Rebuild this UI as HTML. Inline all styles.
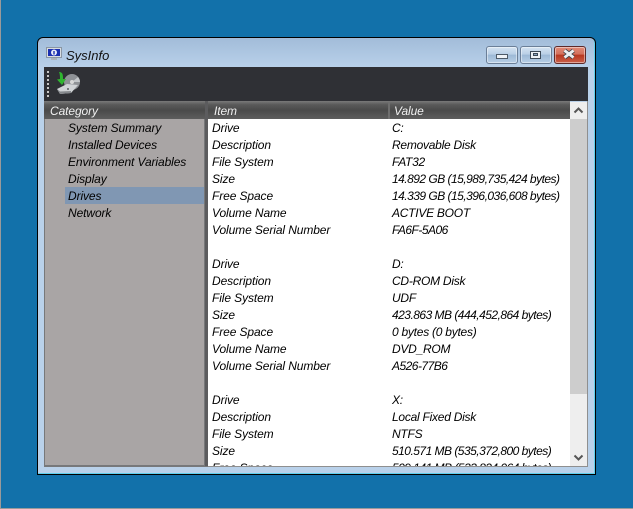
<!DOCTYPE html>
<html><head><meta charset="utf-8"><style>
html,body{margin:0;padding:0}
body{width:633px;height:509px;overflow:hidden;background:#1271aa;position:relative;font:italic 12px "Liberation Sans",sans-serif;color:#000}
div{position:absolute;box-sizing:border-box}
.t{white-space:nowrap;line-height:17px;height:17px;letter-spacing:-.1px}
.n{letter-spacing:-.52px}
.v{letter-spacing:-.25px}
.b{border:1px solid #6b7f98;border-radius:3px;height:18px;top:46px;background:linear-gradient(#d5e3f2 0,#b9cfe6 45%,#9db9d6 50%,#b8cfe6 100%);box-shadow:inset 0 0 0 1px rgba(255,255,255,.45)}
</style></head><body>
<div style="left:0;top:0;width:633px;height:509px;border-left:1px solid #9a9a9a;border-bottom:1px solid #9a9a9a"></div>
<div style="left:37px;top:37px;width:559px;height:438px;background:linear-gradient(#a2bcd9 0,#b9d1ea 30px);border:1px solid #000;border-radius:6px 6px 0 0;box-shadow:inset -1px -1px 0 #5fd0ee"></div>
<svg style="position:absolute;left:46px;top:47px" width="17" height="14" viewBox="0 0 17 14"><rect x=".5" y=".5" width="15" height="10" fill="#d8dde2" stroke="#8a96a3"/><rect x="2" y="2" width="12" height="7" fill="#1a2fb0"/><circle cx="8" cy="5.5" r="3" fill="#e8ecf8"/><rect x="7.3" y="4" width="1.4" height="3.5" fill="#1a2fb0"/><rect x="5" y="11" width="6" height="2" fill="#aab2ba"/></svg>
<div class="t" style="left:66px;top:47px;font-size:13px;color:#111;letter-spacing:0">SysInfo</div>
<div class="b" style="left:486px;width:32px"></div>
<div style="left:496px;top:54px;width:12px;height:5px;background:#eef2f7;border:1px solid #4d5a68"></div>
<div class="b" style="left:520px;width:32px"></div>
<div style="left:530px;top:51px;width:11px;height:8px;background:#eef2f7;border:1px solid #3d4a58"></div>
<div style="left:533px;top:53px;width:5px;height:3px;background:#8aa4c0;border:1px solid #3d4a58"></div>
<div class="b" style="left:554px;width:32px;border-color:#5e2a2a;background:linear-gradient(#e08a78 0,#d3705c 45%,#b8361f 50%,#c9604a 100%)"></div>
<svg style="position:absolute;left:561px;top:48px" width="16" height="12" viewBox="0 0 16 12"><path d="M3.5 2.5L12.5 9.5M12.5 2.5L3.5 9.5" stroke="#3c4248" stroke-width="4.4"/><path d="M3.5 2.5L12.5 9.5M12.5 2.5L3.5 9.5" stroke="#eceff2" stroke-width="2.8"/></svg>
<div style="left:44px;top:67px;width:544px;height:34px;background:#2f3035"></div>
<div style="left:47px;top:71px;width:2px;height:27px;background:repeating-linear-gradient(#c8c8c8 0 2px,#2f3035 2px 4px)"></div>
<svg style="position:absolute;left:56px;top:71px" width="26" height="26" viewBox="0 0 26 26"><circle cx="16" cy="11" r="8" fill="#8f9296"/><path d="M16 11L22 6A8 8 0 0 1 24 11Z" fill="#c4c7ca"/><circle cx="16" cy="11" r="2" fill="#d8d8d8"/><path d="M1 18L11 13L22 14L15 22L4 23Z" fill="#d0d3d6"/><path d="M1 18L4 23L15 22L15 20L4 20.5Z" fill="#85888c"/><circle cx="12" cy="18" r="1" fill="#5a5d60"/><path d="M3 1C5 1 6 2 6.5 3C7 5 7 6 7 8L10 8L6 14L1 8.5L4 8C4 6 4 3 3 1Z" fill="#2fb52f"/></svg>
<div style="left:44px;top:101px;width:161px;height:365px;background:#a9a5a5;border:1px solid #77787a;border-top:0"></div>
<div style="left:44px;top:101px;width:161px;height:18px;background:linear-gradient(#7a7a7a 0,#5a5a5a 20%,#4a4a4a 50%,#5d5d5d 100%)"></div>
<div style="left:205px;top:101px;width:3px;height:365px;background:#5c5c5e"></div>
<div style="left:208px;top:101px;width:362px;height:18px;background:linear-gradient(#7a7a7a 0,#5a5a5a 20%,#4a4a4a 50%,#5d5d5d 100%)"></div>
<div style="left:388px;top:102px;width:2px;height:17px;background:#6f6f6f"></div>
<div style="left:208px;top:119px;width:362px;height:347px;background:#fff"></div>
<div style="left:570px;top:102px;width:17px;height:364px;background:#eeeeee"></div>
<div style="left:570px;top:119px;width:17px;height:275px;background:#cdcdcd"></div>
<div style="left:587px;top:101px;width:1px;height:366px;background:#8f8f8f"></div>
<div style="left:208px;top:466px;width:380px;height:1px;background:#8f8f8f"></div>
<div style="left:44px;top:466px;width:164px;height:1px;background:#77787a"></div>
<svg style="position:absolute;left:572px;top:105px" width="13" height="10" viewBox="0 0 13 10"><path d="M2.5 7.5L6.5 3.5L10.5 7.5" fill="none" stroke="#555" stroke-width="2"/></svg>
<svg style="position:absolute;left:572px;top:453px" width="13" height="10" viewBox="0 0 13 10"><path d="M2.5 2.5L6.5 6.5L10.5 2.5" fill="none" stroke="#555" stroke-width="2"/></svg>
<div style="left:65px;top:187px;width:139px;height:17px;background:#8097b3"></div>
<div style="left:208px;top:120px;width:362px;height:346px;overflow:hidden">
<div class="t" style="left:4px;top:0">Drive</div><div class="t v" style="left:184px;top:0">C:</div>
<div class="t" style="left:4px;top:17px">Description</div><div class="t v" style="left:184px;top:17px">Removable Disk</div>
<div class="t" style="left:4px;top:34px">File System</div><div class="t v" style="left:184px;top:34px">FAT32</div>
<div class="t" style="left:4px;top:51px">Size</div><div class="t n" style="left:184px;top:51px">14.892 GB (15,989,735,424 bytes)</div>
<div class="t" style="left:4px;top:68px">Free Space</div><div class="t n" style="left:184px;top:68px">14.339 GB (15,396,036,608 bytes)</div>
<div class="t" style="left:4px;top:85px">Volume Name</div><div class="t v" style="left:184px;top:85px">ACTIVE BOOT</div>
<div class="t" style="left:4px;top:102px">Volume Serial Number</div><div class="t n" style="left:184px;top:102px">FA6F-5A06</div>
<div class="t" style="left:4px;top:136px">Drive</div><div class="t v" style="left:184px;top:136px">D:</div>
<div class="t" style="left:4px;top:153px">Description</div><div class="t v" style="left:184px;top:153px">CD-ROM Disk</div>
<div class="t" style="left:4px;top:170px">File System</div><div class="t v" style="left:184px;top:170px">UDF</div>
<div class="t" style="left:4px;top:187px">Size</div><div class="t n" style="left:184px;top:187px">423.863 MB (444,452,864 bytes)</div>
<div class="t" style="left:4px;top:204px">Free Space</div><div class="t v" style="left:184px;top:204px">0 bytes (0 bytes)</div>
<div class="t" style="left:4px;top:221px">Volume Name</div><div class="t v" style="left:184px;top:221px">DVD_ROM</div>
<div class="t" style="left:4px;top:238px">Volume Serial Number</div><div class="t n" style="left:184px;top:238px">A526-77B6</div>
<div class="t" style="left:4px;top:272px">Drive</div><div class="t v" style="left:184px;top:272px">X:</div>
<div class="t" style="left:4px;top:289px">Description</div><div class="t v" style="left:184px;top:289px">Local Fixed Disk</div>
<div class="t" style="left:4px;top:306px">File System</div><div class="t v" style="left:184px;top:306px">NTFS</div>
<div class="t" style="left:4px;top:323px">Size</div><div class="t n" style="left:184px;top:323px">510.571 MB (535,372,800 bytes)</div>
<div class="t" style="left:4px;top:340px">Free Space</div><div class="t n" style="left:184px;top:340px">509.141 MB (533,824,064 bytes)</div>
</div>
<div style="left:0;top:0;width:633px;height:509px">
<div class="t" style="left:50px;top:103px;color:#f0f0f0">Category</div>
<div class="t" style="left:214px;top:103px;color:#f0f0f0">Item</div>
<div class="t" style="left:394px;top:103px;color:#f0f0f0">Value</div>
<div class="t" style="left:68px;top:120px">System Summary</div>
<div class="t" style="left:68px;top:137px">Installed Devices</div>
<div class="t" style="left:68px;top:154px">Environment Variables</div>
<div class="t" style="left:68px;top:171px">Display</div>
<div class="t" style="left:68px;top:188px">Drives</div>
<div class="t" style="left:68px;top:205px">Network</div>
</div>
</body></html>
